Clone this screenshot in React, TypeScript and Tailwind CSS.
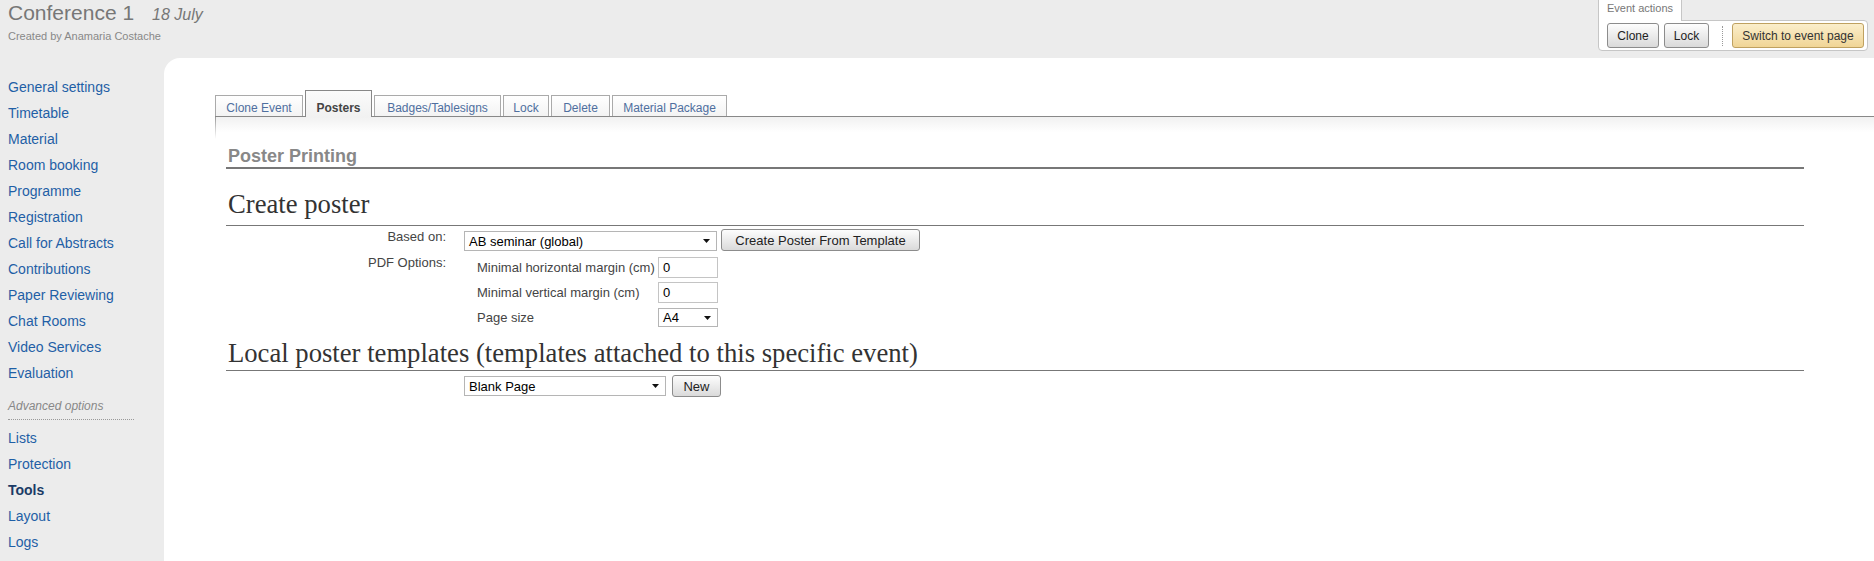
import React from "react";

const mainLinks = [
  "General settings",
  "Timetable",
  "Material",
  "Room booking",
  "Programme",
  "Registration",
  "Call for Abstracts",
  "Contributions",
  "Paper Reviewing",
  "Chat Rooms",
  "Video Services",
  "Evaluation",
];

const advancedLinks = ["Lists", "Protection", "Tools", "Layout", "Logs"];

const tabs = [
  { label: "Clone Event", w: "w-[88px]" },
  { label: "Posters", w: "w-[67px]" },
  { label: "Badges/Tablesigns", w: "w-[127px]" },
  { label: "Lock", w: "w-[46px]" },
  { label: "Delete", w: "w-[59px]" },
  { label: "Material Package", w: "w-[115px]" },
];

const Arrow = () => (
  <svg width="7" height="4" viewBox="0 0 7 4" className="shrink-0">
    <path d="M0 0h7L3.5 4z" fill="#111" />
  </svg>
);

const FakeSelect = ({ value, className }: { value: string; className: string }) => (
  <div
    className={`flex items-center justify-between border border-[#b5b5b5] bg-white pl-[4px] pr-[6px] text-[13px] leading-none text-black ${className}`}
  >
    <span>{value}</span>
    <Arrow />
  </div>
);

const Button = ({ children, className }: { children: React.ReactNode; className: string }) => (
  <button
    className={`rounded-[3px] border border-[#8c8c8c] bg-[linear-gradient(#fdfdfd,#dadada)] text-center leading-none text-[#222] ${className}`}
  >
    {children}
  </button>
);

const App = () => {
  return (
    <div className="flex min-h-screen flex-col bg-[#ececec] font-['Liberation_Sans',Arial,sans-serif]">
      {/* Header */}
      <header className="flex h-[58px] items-start justify-between">
        <div className="pl-[8px] pt-[1px]">
          <div className="flex items-baseline leading-[24px] text-[#777]">
            <span className="text-[21px]">Conference 1</span>
            <span className="ml-[18px] text-[16px] italic">18 July</span>
          </div>
          <div className="mt-[3px] text-[11px] leading-[13px] text-[#888]">
            Created by Anamaria Costache
          </div>
        </div>

        <div className="mr-[6px] flex flex-col items-start">
          <div className="relative z-10 h-[21px] border-x border-[#c6c6c6] bg-white px-[8px] pt-[1px] text-[11px] leading-[14px] text-[#777]">
            Event actions
          </div>
          <div className="-mt-px flex items-center rounded-tr-[4px] rounded-b-[4px] border border-[#c6c6c6] bg-white pl-[8px] pr-[3px] pt-[2px] pb-[2px]">
            <Button className="h-[25px] w-[52px] text-[12px]">Clone</Button>
            <Button className="ml-[5px] h-[25px] w-[45px] text-[12px]">Lock</Button>
            <div className="ml-[13px] h-[20px] border-l border-dotted border-[#999]" />
            <button className="ml-[9px] h-[25px] w-[132px] rounded-[3px] border border-[#bfa160] bg-[linear-gradient(#fbeecb,#f0d596)] text-[12px] leading-none text-[#333]">
              Switch to event page
            </button>
          </div>
        </div>
      </header>

      <div className="flex flex-1">
        {/* Sidebar */}
        <nav className="w-[164px] shrink-0 pl-[8px] pt-[16px] text-[14px] leading-[26px] text-[#1f5fa6]">
          {mainLinks.map((l) => (
            <div key={l}>{l}</div>
          ))}
          <div className="mt-[12px] w-[126px] border-b border-dotted border-[#999] pb-[5px] text-[12px] italic leading-[16px] text-[#888]">
            Advanced options
          </div>
          <div className="mt-[5px]">
            {advancedLinks.map((l) => (
              <div key={l} className={l === "Tools" ? "font-bold text-[#1b3b66]" : ""}>
                {l}
              </div>
            ))}
          </div>
        </nav>

        {/* Main panel */}
        <main className="flex-1 rounded-tl-[16px] bg-white pl-[51px] pt-[32px]">
          <div className="flex items-end gap-[2px] border-b border-[#888]">
            {tabs.map((t) =>
              t.label === "Posters" ? (
                <div
                  key={t.label}
                  className={`-mb-px border-x border-t border-[#888] bg-[linear-gradient(#fbfbfb,#f1f1f1)] pt-[10px] pb-[2px] text-center text-[12px] font-bold leading-[14px] text-[#444] ${t.w}`}
                >
                  {t.label}
                </div>
              ) : (
                <div
                  key={t.label}
                  className={`border-x border-t border-[#aaa] bg-[linear-gradient(#fff,#f3f3f3)] pt-[5px] pb-[1px] text-center text-[12px] leading-[14px] text-[#4f6f9f] ${t.w}`}
                >
                  {t.label}
                </div>
              )
            )}
          </div>

          <div className="flex h-[22px]">
            <div className="w-px bg-[linear-gradient(#999,rgba(255,255,255,0))]" />
            <div className="flex-1 bg-[linear-gradient(#f1f1f1,#fff_70%)]" />
          </div>

          <div className="ml-[11px] mr-[70px]">
            <h1 className="mt-[7px] border-b-2 border-[#777] pl-[2px] text-[18px] font-bold leading-[21px] text-[#888]">
              Poster Printing
            </h1>

            <h2 className="mt-[20px] border-b border-[#777] pb-[6px] pl-[2px] font-['Liberation_Serif','Times_New_Roman',serif] text-[26.67px] leading-[30px] text-[#333]">
              Create poster
            </h2>

            <div className="mt-[3px] flex items-start text-[13px] leading-[15px] text-[#444]">
              <div className="w-[220px] text-right">Based on:</div>
              <div className="ml-[18px] flex items-start">
                <FakeSelect value="AB seminar (global)" className="mt-[2px] h-[20px] w-[253px]" />
                <Button className="ml-[4px] h-[22px] w-[199px] text-[13px]">
                  Create Poster From Template
                </Button>
              </div>
            </div>

            <div className="mt-[4px] flex items-start text-[13px] leading-[15px] text-[#444]">
              <div className="w-[220px] text-right">PDF Options:</div>
              <div className="ml-[18px] pl-[13px]">
                <div className="flex h-[25px] items-center">
                  <div className="w-[181px]">Minimal horizontal margin (cm)</div>
                  <div className="flex h-[21px] w-[60px] items-center border border-[#c4c4c4] pl-[4px] text-black">0</div>
                </div>
                <div className="flex h-[25px] items-center">
                  <div className="w-[181px]">Minimal vertical margin (cm)</div>
                  <div className="flex h-[21px] w-[60px] items-center border border-[#c4c4c4] pl-[4px] text-black">0</div>
                </div>
                <div className="flex h-[25px] items-center">
                  <div className="w-[181px]">Page size</div>
                  <FakeSelect value="A4" className="h-[19px] w-[60px]" />
                </div>
              </div>
            </div>

            <h2 className="mt-[8px] border-b border-[#777] pb-[2px] pl-[2px] font-['Liberation_Serif','Times_New_Roman',serif] text-[26.67px] leading-[30px] text-[#333]">
              Local poster templates (templates attached to this specific event)
            </h2>

            <div className="mt-[4px] ml-[238px] flex items-start">
              <FakeSelect value="Blank Page" className="mt-[1px] h-[20px] w-[202px]" />
              <Button className="ml-[6px] h-[22px] w-[49px] text-[13px]">New</Button>
            </div>
          </div>
        </main>
      </div>
    </div>
  );
};

export default App;
